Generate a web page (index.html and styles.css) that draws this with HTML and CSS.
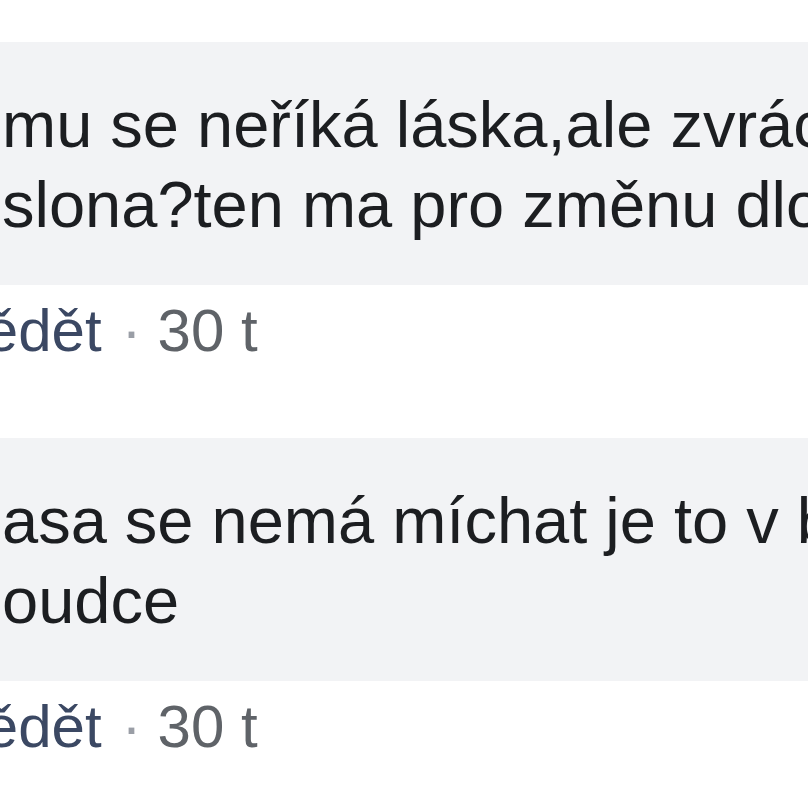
FILE: index.html
```html
<!DOCTYPE html>
<html lang="cs">
<head>
  <meta charset="UTF-8" />
  <meta name="viewport" content="width=device-width, initial-scale=1.0" />
  <title>Komentáře</title>
  <link rel="stylesheet" href="styles.css">
</head>
<body>
  <div class="thread">
    <div class="comment">
      <div class="bubble">
        <span class="text">mu se neříká láska,ale zvrácenost<br>slona?ten ma pro změnu dlouhý</span>
      </div>
      <div class="actions">
        <a href="#" class="reply">Odpovědět</a><span class="dot">·</span><span class="time">30 t</span>
      </div>
    </div>

    <div class="comment">
      <div class="bubble">
        <span class="text">asa se nemá míchat je to v bibli<br>oudce</span>
      </div>
      <div class="actions">
        <a href="#" class="reply">Odpovědět</a><span class="dot">·</span><span class="time">30 t</span>
      </div>
    </div>
  </div>
</body>
</html>
```

FILE: styles.css
```css
html, body {
  margin: 0;
  padding: 0;
  background: #fff;
  overflow: hidden;
}
body {
  font-family: "Liberation Sans", Arial, sans-serif;
  color: #1c1e21;
}
.thread {
  padding-top: 42px;
  width: 1400px;
}
.comment {
  margin-bottom: 67px;
}
.bubble {
  background: #f2f3f5;
  padding: 43px 0 40px 2px;
  font-size: 65px;
  line-height: 80px;
  white-space: nowrap;
}
.actions {
  margin-top: 6px;
  margin-left: -192px;
  font-size: 60px;
  line-height: 80px;
  white-space: nowrap;
}
.reply {
  color: #3b4863;
  text-decoration: none;
}
.dot {
  color: #9a9ea6;
  padding: 0 16px 0 20px;
}
.time {
  color: #5f6368;
}
```
